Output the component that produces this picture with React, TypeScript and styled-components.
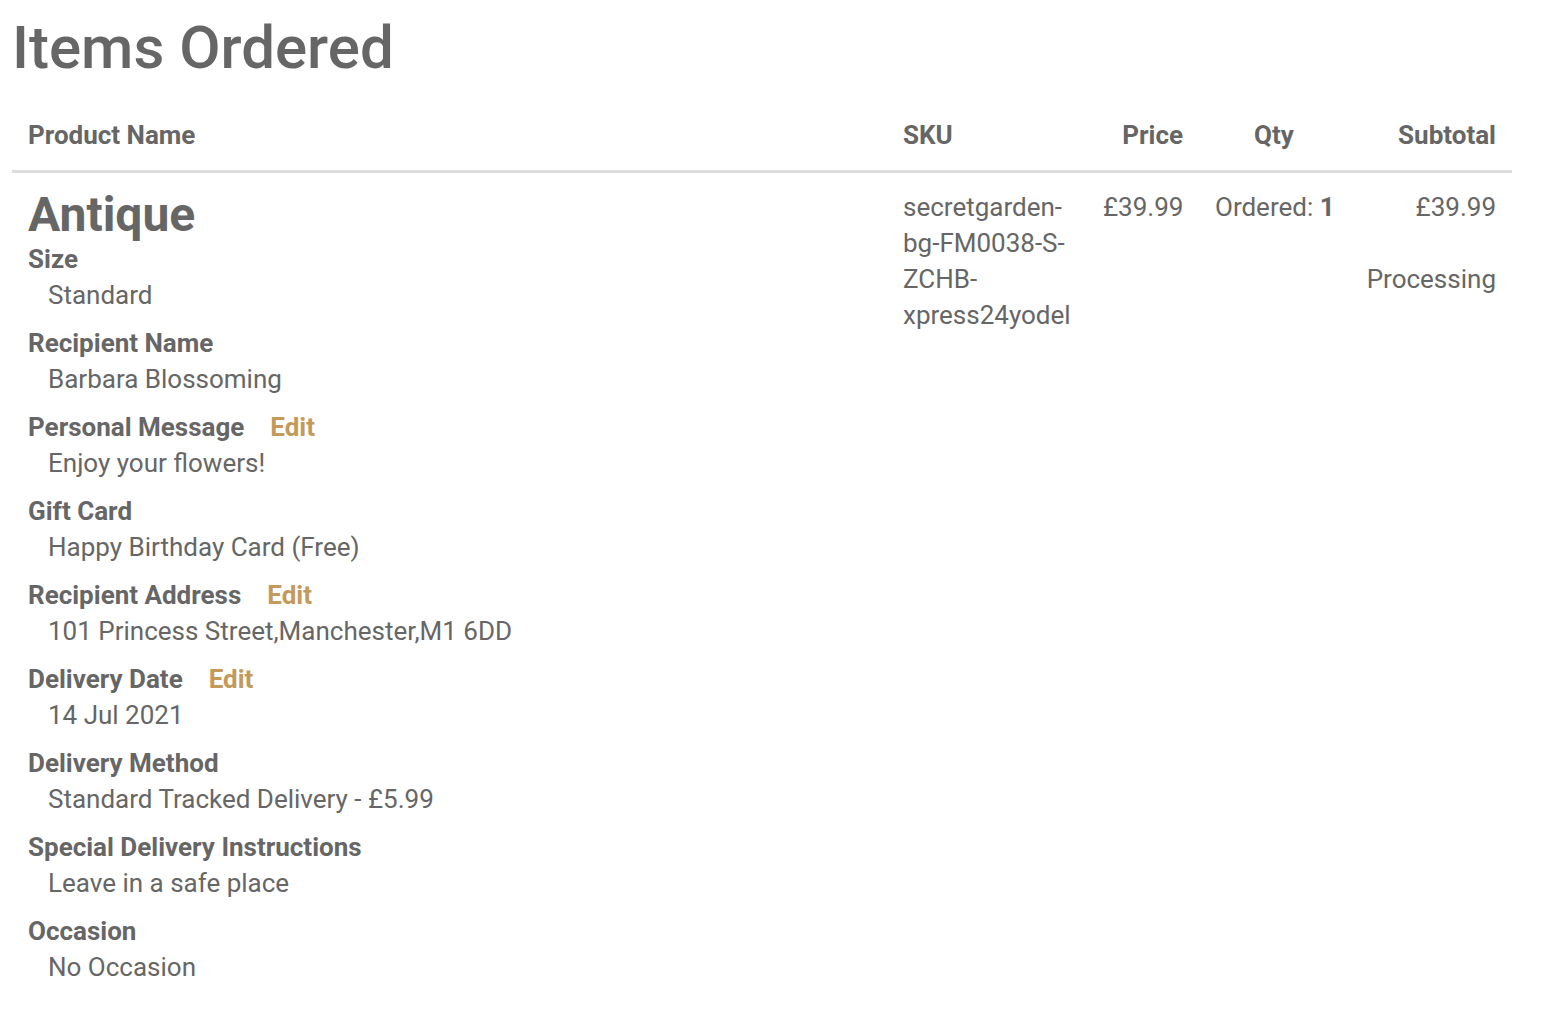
import styled, { createGlobalStyle } from "styled-components";

const GlobalStyle = createGlobalStyle`
  body {
    margin: 0;
    background: #fff;
    font-family: Roboto, "Liberation Sans", Arial, sans-serif;
    color: #666;
  }
`;

const Page = styled.div`
  padding: 12px;
`;

const Title = styled.h1`
  margin: 0 0 17px;
  font-size: 60px;
  line-height: 72px;
  font-weight: 500;
  color: #666;
`;

const Table = styled.table`
  width: 1500px;
  border-collapse: collapse;
  table-layout: fixed;
  font-size: 26px;
  line-height: 36px;
`;

const Th = styled.th<{ $align?: string }>`
  padding: 16px 16px 17px;
  text-align: ${(p) => p.$align || "left"};
  font-weight: 700;
  border-bottom: 3px solid #ddd;
`;

const Td = styled.td<{ $align?: string; $nowrap?: boolean }>`
  padding: 16px;
  vertical-align: top;
  text-align: ${(p) => p.$align || "left"};
  white-space: ${(p) => (p.$nowrap ? "nowrap" : "normal")};
`;

const ProductName = styled.div`
  font-size: 48px;
  line-height: 52px;
  font-weight: 700;
`;

const Options = styled.dl`
  margin: 0;
`;

const Option = styled.div`
  & + & {
    margin-top: 12px;
  }
`;

const Label = styled.dt`
  font-weight: 700;
`;

const Value = styled.dd`
  margin: 0 0 0 20px;
`;

const EditLink = styled.a`
  margin-left: 26px;
  color: #c39a5b;
  text-decoration: none;
  font-weight: 700;
  cursor: pointer;
`;

const Sku = styled.div`
  overflow-wrap: break-word;
`;

const Status = styled.div`
  margin-top: 36px;
`;

const options = [
  { label: "Size", value: "Standard" },
  { label: "Recipient Name", value: "Barbara Blossoming" },
  { label: "Personal Message", value: "Enjoy your flowers!", edit: true },
  { label: "Gift Card", value: "Happy Birthday Card (Free)" },
  {
    label: "Recipient Address",
    value: "101 Princess Street,Manchester,M1 6DD",
    edit: true,
  },
  { label: "Delivery Date", value: "14 Jul 2021", edit: true },
  { label: "Delivery Method", value: "Standard Tracked Delivery - £5.99" },
  { label: "Special Delivery Instructions", value: "Leave in a safe place" },
  { label: "Occasion", value: "No Occasion" },
];

export default function App() {
  return (
    <Page>
      <GlobalStyle />
      <Title>Items Ordered</Title>
      <Table>
        <colgroup>
          <col style={{ width: 875 }} />
          <col style={{ width: 200 }} />
          <col style={{ width: 112 }} />
          <col style={{ width: 150 }} />
          <col style={{ width: 163 }} />
        </colgroup>
        <thead>
          <tr>
            <Th>Product Name</Th>
            <Th>SKU</Th>
            <Th $align="right">Price</Th>
            <Th $align="center">Qty</Th>
            <Th $align="right">Subtotal</Th>
          </tr>
        </thead>
        <tbody>
          <tr>
            <Td>
              <ProductName>Antique</ProductName>
              <Options>
                {options.map((o) => (
                  <Option key={o.label}>
                    <Label>
                      {o.label}
                      {o.edit && <EditLink>Edit</EditLink>}
                    </Label>
                    <Value>{o.value}</Value>
                  </Option>
                ))}
              </Options>
            </Td>
            <Td>
              <Sku>secretgarden-bg-FM0038-S-ZCHB-xpress24yodel</Sku>
            </Td>
            <Td $align="right">£39.99</Td>
            <Td $align="center" $nowrap>
              Ordered: <b>1</b>
            </Td>
            <Td $align="right">
              £39.99
              <Status>Processing</Status>
            </Td>
          </tr>
        </tbody>
      </Table>
    </Page>
  );
}
